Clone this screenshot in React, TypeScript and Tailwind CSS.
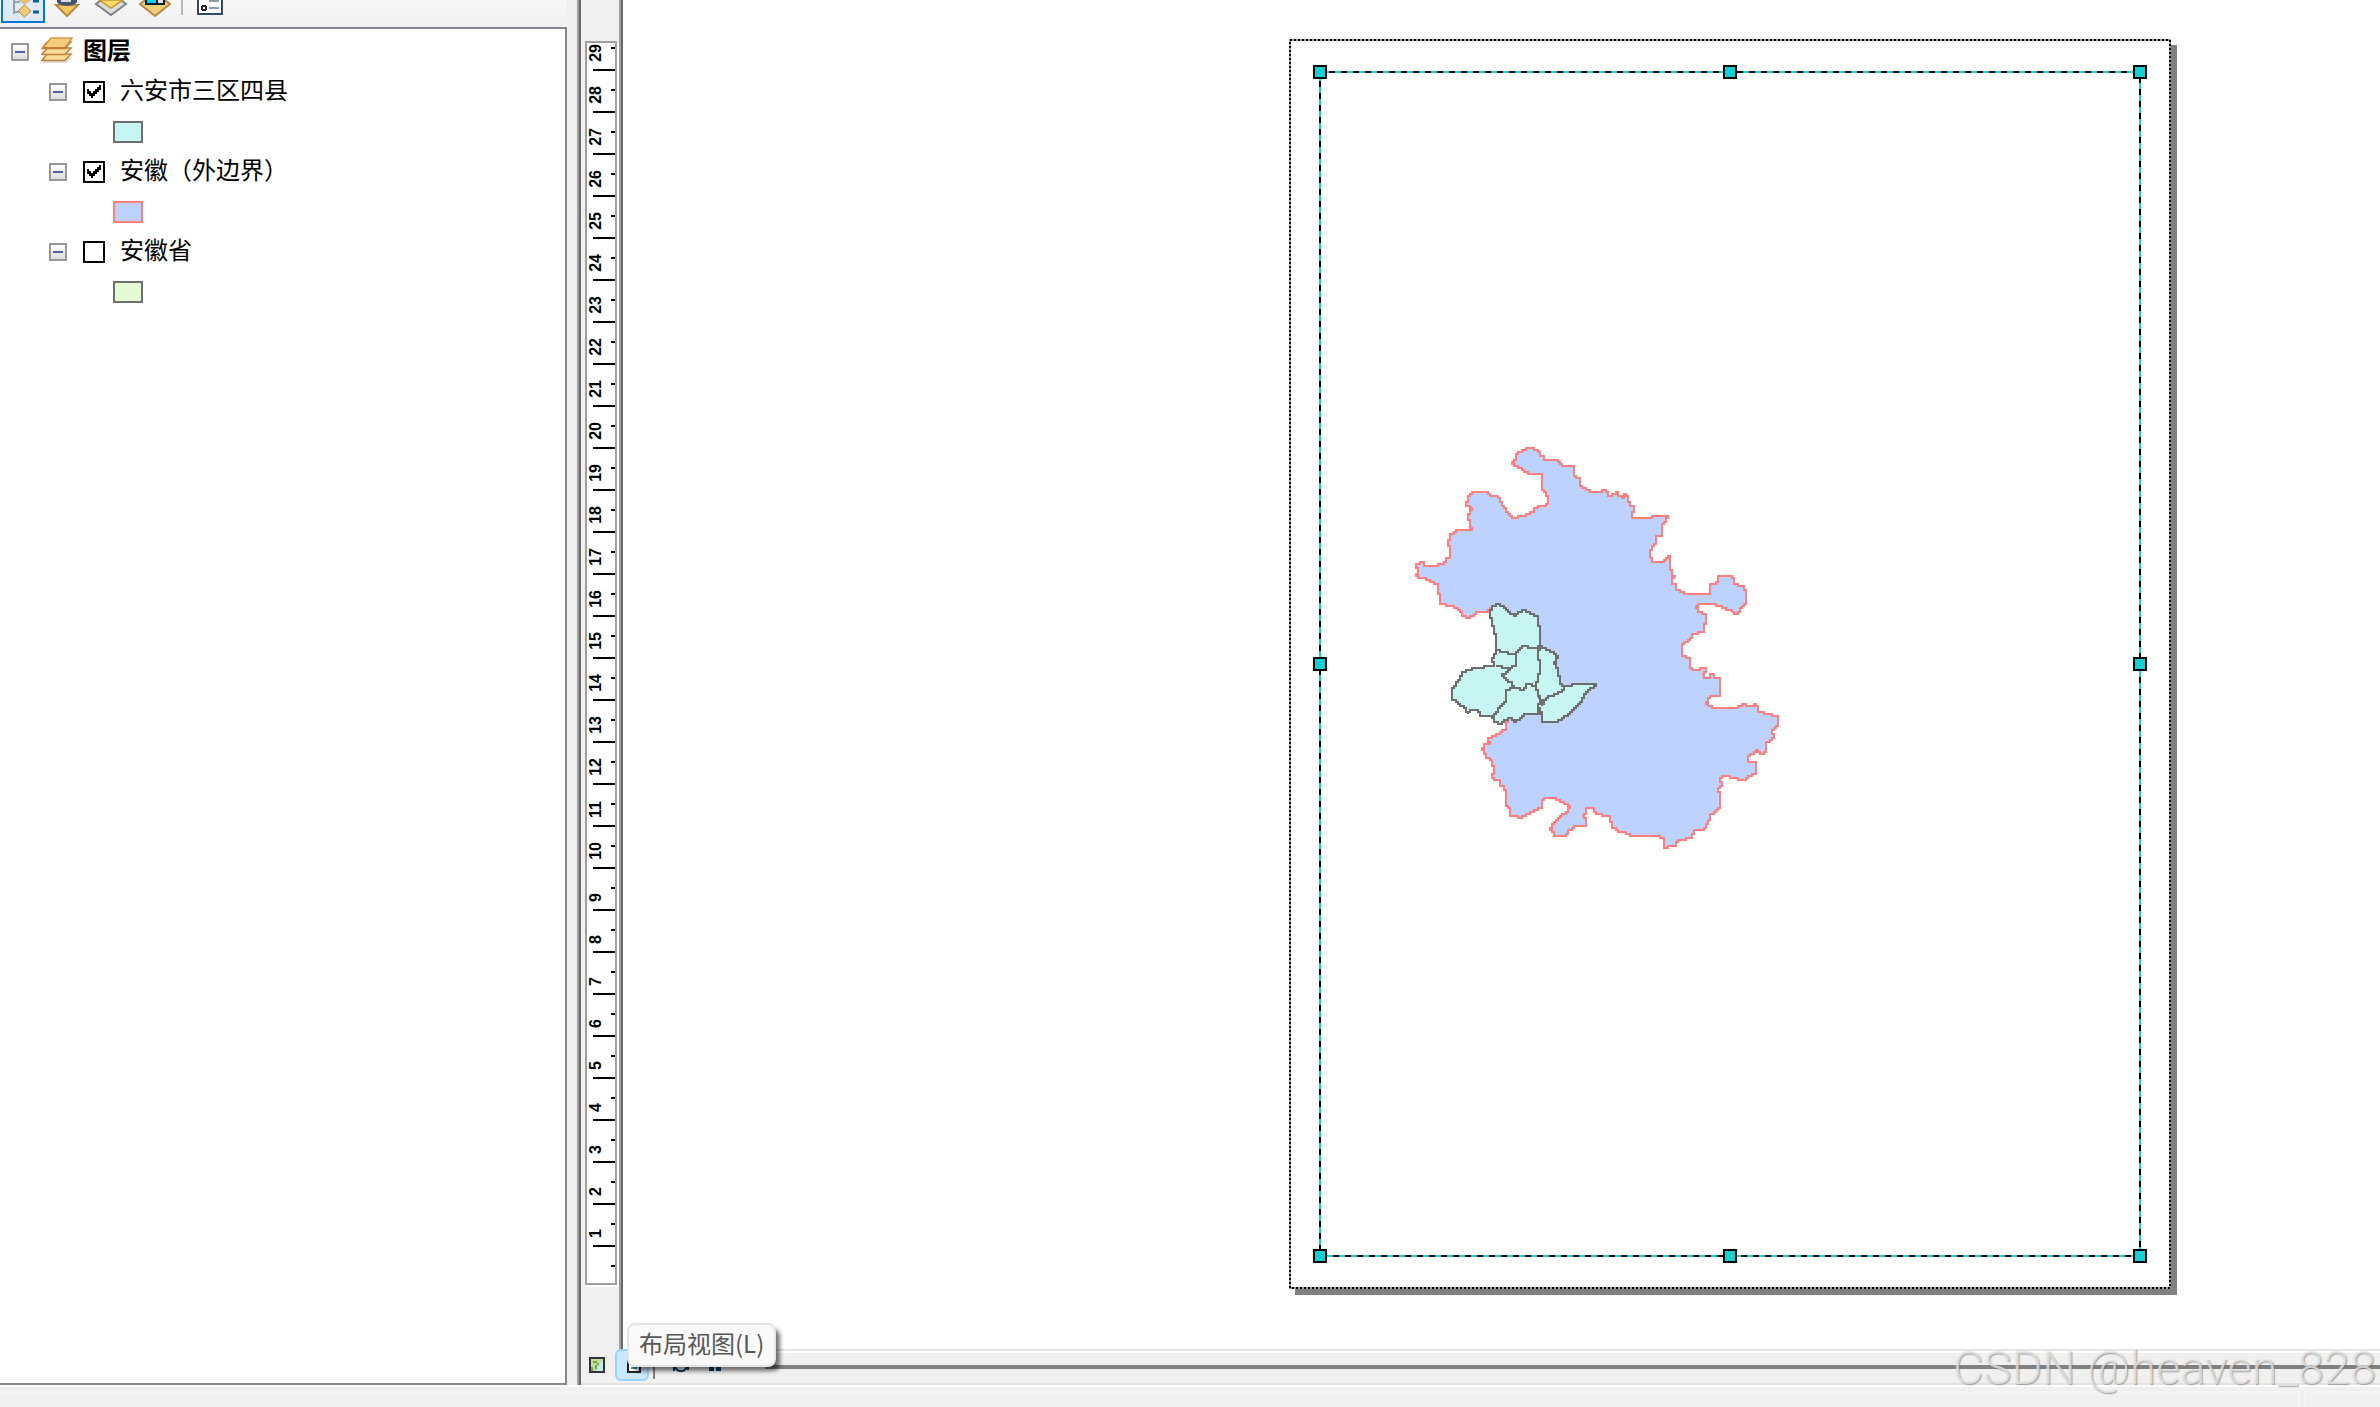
import React from "react";

const PROVINCE =
  "1533,448 1538,453 1540,457 1545,457 1545,461 1557,461 1560,465 1565,467 1574,467 1574,476 1580,480 1580,486 1585,488 1590,492 1600,492 1602,490 1606,491 1608,496 1613,494 1617,492 1619,497 1624,498 1624,495 1628,496 1629,502 1631,506 1634,507 1633,518 1650,518 1652,516 1668,516 1666,523 1662,527 1662,537 1656,537 1656,545 1652,547 1650,556 1653,562 1663,562 1668,557 1670,558 1671,568 1672,576 1677,576 1672,579 1672,585 1676,585 1677,591 1682,592 1684,594 1710,594 1711,584 1716,584 1718,577 1732,577 1734,584 1740,586 1745,587 1746,598 1747,604 1742,607 1741,612 1736,614 1733,610 1728,611 1723,606 1715,604 1698,604 1697,608 1699,613 1706,614 1707,622 1704,626 1705,633 1695,634 1691,640 1686,643 1683,646 1683,657 1690,658 1691,668 1695,670 1705,668 1706,673 1703,675 1705,678 1710,678 1711,674 1714,675 1715,679 1720,678 1720,697 1711,697 1707,704 1712,708 1737,708 1743,704 1750,707 1757,705 1758,713 1771,714 1774,717 1778,717 1778,726 1773,732 1774,738 1767,744 1766,753 1762,754 1759,751 1754,755 1749,756 1749,763 1756,762 1757,774 1750,776 1747,780 1733,779 1730,776 1723,777 1721,781 1723,787 1719,791 1721,798 1721,808 1717,813 1710,816 1709,824 1704,830 1695,831 1692,839 1683,840 1677,842 1677,847 1669,846 1669,849 1664,848 1664,839 1658,836 1633,836 1627,833 1618,833 1617,828 1612,827 1610,816 1597,815 1595,808 1589,808 1586,811 1587,815 1583,816 1587,818 1586,826 1577,827 1568,832 1566,836 1557,836 1551,829 1552,824 1560,817 1567,813 1570,807 1560,800 1557,798 1546,798 1543,802 1543,809 1537,810 1528,815 1522,819 1517,816 1510,816 1510,808 1507,805 1507,792 1505,787 1500,784 1500,780 1493,779 1493,774 1495,770 1493,760 1487,757 1485,752 1483,748 1484,745 1490,744 1489,738 1500,732 1506,729 1506,723 1520,700 1510,640 1492,608 1488,612 1478,612 1474,617 1468,619 1462,614 1460,610 1455,607 1440,605 1439,584 1430,581 1425,578 1417,576 1419,571 1417,564 1422,562 1425,566 1435,567 1438,564 1446,563 1447,558 1450,556 1451,549 1449,545 1450,534 1456,533 1457,530 1473,530 1470,524 1469,514 1472,508 1467,505 1468,497 1473,492 1486,492 1490,496 1498,497 1500,503 1505,508 1507,513 1513,519 1523,516 1533,513 1535,508 1549,505 1549,498 1546,492 1542,488 1543,477 1542,474 1530,475 1522,469 1517,467 1513,462 1517,459 1517,454 1522,451 1528,449 1533,448";

const CITY =
  "1491,612 1493,607 1499,604 1503,607 1508,612 1514,617 1519,613 1524,611 1530,615 1538,617 1538,625 1541,630 1541,647 1548,650 1554,655 1559,657 1557,662 1554,665 1559,670 1560,685 1564,687 1577,685 1595,685 1596,687 1590,690 1584,697 1583,703 1573,712 1563,721 1554,723 1543,723 1543,715 1527,714 1523,719 1517,722 1513,719 1506,721 1503,725 1497,723 1493,717 1483,716 1478,711 1473,711 1468,715 1466,709 1460,704 1457,700 1453,698 1453,688 1458,680 1462,673 1475,668 1490,667 1494,666 1493,658 1496,650 1496,637 1492,623 1491,612";

const COUNTY_LINES = [
  "1496,651 1505,652 1513,655 1517,653 1522,647 1533,648 1541,646",
  "1516,655 1516,667 1510,668 1497,666",
  "1512,668 1509,673 1503,677 1506,681 1511,682 1514,689 1525,690 1527,685 1537,687",
  "1514,689 1507,690 1506,702 1500,708 1497,715 1493,717",
  "1540,647 1538,655 1541,671 1538,678 1537,687 1539,697 1542,702 1538,707 1538,714",
  "1539,699 1544,702 1542,706",
  "1542,702 1548,697 1557,694 1563,690 1564,687",
  "1538,709 1543,715",
];

// Walks a line on the map's 2px raster so that boundaries are drawn in steps.
function rasterise(points: string): string {
  const nodes = points.split(" ").map((p) => p.split(",").map((v) => Math.floor(Number(v) / 2)));
  let [x, y] = nodes[0];
  const out = [`${x * 2},${y * 2}`];
  for (const [tx, ty] of nodes.slice(1)) {
    const sx = x;
    const sy = y;
    const steps = Math.max(Math.abs(tx - sx), Math.abs(ty - sy));
    for (let i = 1; i <= steps; i++) {
      const nx = Math.round(sx + ((tx - sx) * i) / steps);
      const ny = Math.round(sy + ((ty - sy) * i) / steps);
      if (nx !== x && ny !== y) out.push(`${nx * 2},${y * 2}`);
      out.push(`${nx * 2},${ny * 2}`);
      x = nx;
      y = ny;
    }
  }
  return out.join(" ");
}

const LABELS = Array.from({ length: 29 }, (_, i) => 29 - i);

function Toggle({ name }: { name: string }) {
  return (
    <button
      aria-label={name}
      className="flex size-[18px] shrink-0 items-center justify-center border-2 border-[#989898] bg-linear-to-b from-white to-[#dcdcdc]"
    >
      <span className="h-[2px] w-[10px] bg-[#4b63a7]" />
    </button>
  );
}

function Layer({ id, name, checked, swatch }: { id: string; name: string; checked: boolean; swatch: string }) {
  return (
    <li>
      <div className="flex h-10 items-center pl-[49px]">
        <Toggle name={`折叠 ${name}`} />
        <span className="ml-4 grid size-[22px] shrink-0">
          <input
            id={id}
            type="checkbox"
            defaultChecked={checked}
            className="peer col-start-1 row-start-1 size-[22px] appearance-none border-2 border-black bg-white"
          />
          <svg
            viewBox="0 0 22 22"
            shapeRendering="crispEdges"
            className="pointer-events-none invisible col-start-1 row-start-1 size-[22px] peer-checked:visible"
          >
            <path d="M4 8h2v2h2v2h2v-2h2v-2h2V6h2V4h2v5h-2v2h-2v2h-2v2h-2v2H8v-2H6v-2H4z" fill="#000" />
          </svg>
        </span>
        <label htmlFor={id} className="ml-[15px] pb-1.5 text-2xl leading-8 whitespace-nowrap">
          {name}
        </label>
      </div>
      <div className="flex h-10 items-center pl-[113px]">
        <span className={`h-[22px] w-[30px] border-2 ${swatch}`} />
      </div>
    </li>
  );
}

function Toolbar() {
  return (
    <div className="flex h-[27px] items-start overflow-hidden bg-linear-to-b from-[#f8f8f8] to-[#f0f0f0] pl-px">
      <button aria-label="按绘制顺序列出" className="flex h-[23px] w-11 justify-center border-2 border-t-0 border-[#0078d7] bg-[#deebf5]">
        <svg viewBox="0 0 40 21" className="h-[21px] w-10">
          <path d="M11 0v14M11 2h6M11 12h6" stroke="#8ba5bd" strokeWidth="2" fill="none" />
          <path d="M15 0h13l-6.500 5z" fill="#e3bf79" />
          <path d="M15 11l6.500-6 6.500 6-6.500 6z" fill="#f1cc78" stroke="#b98b48" />
          <path d="M30 1h6M30 12h6" stroke="#07609b" strokeWidth="3" />
        </svg>
      </button>
      <button aria-label="按源列出" className="ml-[9px]">
        <svg viewBox="0 0 26 18" className="h-[18px] w-[26px]">
          <path d="M2 5l11 11 11-11z" fill="#f2c95e" stroke="#b98a4a" strokeWidth="2" />
          <path d="M3 0h20v2c-3 5-17 5-20 0z" fill="#42536b" />
          <path d="M7 0h10v2H7z" fill="#d4dce5" />
        </svg>
      </button>
      <button aria-label="按可见性列出" className="ml-[14px]">
        <svg viewBox="0 0 34 18" className="h-[18px] w-[34px]">
          <path d="M2 4L17 15 32 4 28 1H6z" fill="#ddd" stroke="#828282" strokeWidth="2" />
          <path d="M5 0L17 8 29 0z" fill="#ffdc68" stroke="#c99437" strokeWidth="1.500" />
        </svg>
      </button>
      <button aria-label="按选择列出" className="ml-[10px]">
        <svg viewBox="0 0 34 18" className="h-[18px] w-[34px]">
          <path d="M6 1L2 4 17 16 32 4 28 1z" fill="#f2d07a" stroke="#ba8844" strokeWidth="2" />
          <path d="M7 0h20v5H7z" fill="#111e2d" />
          <path d="M9 0h9v3H9z" fill="#10cfff" />
          <path d="M20 0h5v3h-5z" fill="#e5e5e5" />
        </svg>
      </button>
      <span className="ml-[9px] h-[15px] w-[2px] bg-[#b9b9b9]" />
      <button aria-label="选项" className="ml-[14px]">
        <svg viewBox="0 0 26 15" shapeRendering="crispEdges" className="h-[15px] w-[26px]">
          <path d="M0 0h26v15H0z" fill="#31476a" />
          <path d="M2 0h22v13H2z" fill="#fff" />
          <path d="M12 0h10v2H12zM12 7h10v2H12z" fill="#8d9cb5" />
          <circle cx="7" cy="8" r="2" fill="#fff" stroke="#222" strokeWidth="2" />
        </svg>
      </button>
    </div>
  );
}

function Contents() {
  return (
    <aside className="flex w-[567px] shrink-0 flex-col">
      <Toolbar />
      <div className="flex-1 border-t-2 border-r-2 border-b-2 border-[#828790] bg-white pt-[3px]">
        <div className="flex h-10 items-center pl-[11px]">
          <Toggle name="折叠 图层" />
          <svg viewBox="0 0 32 26" className="mb-1 ml-3 h-[26px] w-8">
            <path d="M2 25h23l5-5" stroke="#ddd" strokeWidth="2" fill="none" />
            {[17, 11, 5].map((y) => (
              <path key={y} d={`M6 ${y}h24l-6 6.500H1z`} fill="#f9dc98" stroke="#c0813c" strokeWidth="1.500" />
            ))}
            <path d="M10 1h21l-7 10H2z" fill="#f3cd7c" stroke="#d99c43" strokeWidth="1.500" />
            <path d="M2 11h22l2-2" fill="none" stroke="#b9772f" strokeWidth="1.500" />
          </svg>
          <span className="ml-[10px] pb-1.5 text-2xl leading-8 font-bold">图层</span>
        </div>
        <ul>
          <Layer id="layer-city" name="六安市三区四县" checked swatch="border-[#6e6e6e] bg-[#c7f5f1]" />
          <Layer id="layer-outline" name="安徽（外边界）" checked swatch="border-[#ff7f7f] bg-[#bed2ff]" />
          <Layer id="layer-province" name="安徽省" checked={false} swatch="border-[#6e6e6e] bg-[#e3f9d2]" />
        </ul>
      </div>
    </aside>
  );
}

function Ruler() {
  return (
    <div className="flex w-[38px] shrink-0 flex-col pt-[41px] pl-1">
      <div className="w-8 border-2 border-[#a0a0a0] bg-white pb-4 shadow-[0_2px_0_0_#fff,2px_2px_0_0_#fff]">
        {LABELS.map((n) => (
          <div key={n} className="flex h-[42px] items-end justify-between first:h-[28px]">
            <div className="flex h-[42px] flex-1 flex-col justify-end">
              <span className="rotate-180 pt-[7px] font-['Liberation_Sans_Narrow','Liberation_Sans',sans-serif] text-base leading-[18px] font-bold [writing-mode:vertical-rl]">
                {n}
              </span>
              <span className="ml-[6px] h-[2px] bg-black" />
            </div>
            <div className="flex h-6 w-1 flex-col justify-between">
              <span className="h-[2px] bg-black" />
              <span className="h-[2px] bg-black" />
            </div>
          </div>
        ))}
        <div className="flex justify-end pt-[18px]">
          <span className="h-[2px] w-1 bg-black" />
        </div>
      </div>
    </div>
  );
}

function MapPage() {
  const xs = [1320, 1730, 2140];
  const ys = [72, 664, 1256];
  return (
    <div className="mt-[39px] mr-[209px] ml-auto h-[1250px] w-[882px] shrink-0 bg-white shadow-[6px_6px_0_0_#808080]">
      <svg viewBox="1289 39 882 1250" shapeRendering="crispEdges" className="block h-full w-full">
        <rect x="1290" y="40" width="880" height="1248" fill="none" stroke="#a0a0a0" strokeWidth="2" />
        <rect x="1290" y="40" width="880" height="1248" fill="none" stroke="#000" strokeWidth="2" strokeDasharray="2 2" />
        <polygon points={rasterise(PROVINCE)} fill="#bed2ff" stroke="#ff7f7f" strokeWidth="2" />
        <polygon points={rasterise(CITY)} fill="#c7f5f1" stroke="#6e6e6e" strokeWidth="2" />
        {COUNTY_LINES.map((p) => (
          <polyline key={p} points={rasterise(p)} fill="none" stroke="#6e6e6e" strokeWidth="2" />
        ))}
        <rect x="1320" y="72" width="820" height="1184" fill="none" stroke="#14cfd3" strokeWidth="2" />
        <rect x="1320" y="72" width="820" height="1184" fill="none" stroke="#000" strokeWidth="2" strokeDasharray="6 6" strokeDashoffset="3" />
        {xs.flatMap((x, i) =>
          ys
            .filter((_, j) => i !== 1 || j !== 1)
            .map((y) => (
              <rect key={`${x}-${y}`} x={x - 6} y={y - 6} width="12" height="12" fill="#14cfd3" stroke="#000" strokeWidth="2" />
            ))
        )}
      </svg>
    </div>
  );
}

function ViewBar() {
  return (
    <div className="relative flex h-8 shrink-0 items-start border-b-2 border-[#e3e3e3]">
      <button aria-label="数据视图" className="mt-1 ml-2">
        <svg viewBox="0 0 16 16" shapeRendering="crispEdges" className="size-4">
          <path d="M0 0h16v16H0z" fill="#333" />
          <path d="M2 2h12v12H2z" fill="#c3e09a" />
          <path d="M12 4h2v10H8v-4h2V6h2z" fill="#c4e9ef" />
          <path d="M4 4h4v2H4zM8 6h2v2H8v4H6V8h2zM2 10h2v4H2z" fill="#79a052" />
        </svg>
      </button>
      <button
        aria-label="布局视图"
        className="-mt-1 ml-[10px] flex h-8 w-[34px] justify-center rounded-md border-2 border-[#99d1ff] bg-[#cce8ff] pt-[6px] pl-1"
      >
        <svg viewBox="0 0 14 16" shapeRendering="crispEdges" className="h-4 w-[14px]">
          <path d="M1 1h12v14H1z" fill="#fff" stroke="#222" strokeWidth="2" />
          <path d="M4 10h2v2H4z" fill="#67b558" />
          <path d="M6 10h4v2H6z" fill="#1684d8" />
        </svg>
      </button>
      <span className="ml-1 h-[26px] w-[2px] bg-[#808080]" />
      <button aria-label="刷新" className="mt-1 ml-[18px]">
        <svg viewBox="0 0 16 16" className="size-4">
          <path d="M2 9c2 7 10 7 12 0M1 14V9h4M15 9v4" fill="none" stroke="#0b3a68" strokeWidth="2" />
        </svg>
      </button>
      <button aria-label="暂停绘制" className="mt-1 ml-5 flex gap-[2px]">
        <span className="h-[14px] w-[5px] bg-[#0b3a68]" />
        <span className="h-[14px] w-[5px] bg-[#0b3a68]" />
      </button>
      <span className="mt-3 ml-11 h-1 flex-1 bg-[#808080]" />
      <div
        role="tooltip"
        className="absolute -top-[30px] left-[46px] rounded-lg border-2 border-[#e5e5e5] bg-[#f9f9f9] px-[10px] pb-1 text-2xl leading-9 whitespace-nowrap text-[#575757] shadow-[5px_5px_4px_-1px_rgba(0,0,0,0.55)]"
      >
        布局视图(L)
      </div>
    </div>
  );
}

export default function App() {
  return (
    <div className="relative flex h-screen flex-col overflow-hidden bg-[#f0f0f0] font-['Noto_Sans_CJK_SC',sans-serif] text-black">
      <main className="flex min-h-0 flex-1">
        <Contents />
        <section className="ml-[10px] flex min-w-0 flex-1 border-l-2 border-[#a0a0a0]">
          <div className="flex min-w-0 flex-1 flex-col border-l-2 border-[#696969]">
            <div className="flex min-h-0 flex-1">
              <Ruler />
              <div className="flex min-w-0 flex-1 border-l-2 border-[#a0a0a0]">
                <div className="flex min-w-0 flex-1 items-start border-l-2 border-[#696969] bg-white">
                  <MapPage />
                </div>
              </div>
            </div>
            <div className="ml-[38px] h-1 shrink-0 border-t-2 border-[#e3e3e3] bg-white" />
            <ViewBar />
          </div>
        </section>
      </main>
      <footer className="flex h-[22px] shrink-0 items-end justify-end gap-1 border-t-2 border-white">
        <div className="h-4 flex-1 border-t-2 border-r-2 border-[#f5f5f5]" />
        <div className="h-4 w-[76px] border-t-2 border-l-2 border-[#f5f5f5]" />
      </footer>
      <p className="absolute right-1 bottom-3 font-['Roboto',sans-serif] text-[47px] leading-[54px] font-light whitespace-nowrap text-[#e6e6e6]/80 [text-shadow:1px_1px_1px_rgba(90,90,90,0.5)]">
        CSDN @heaven_828
      </p>
    </div>
  );
}
